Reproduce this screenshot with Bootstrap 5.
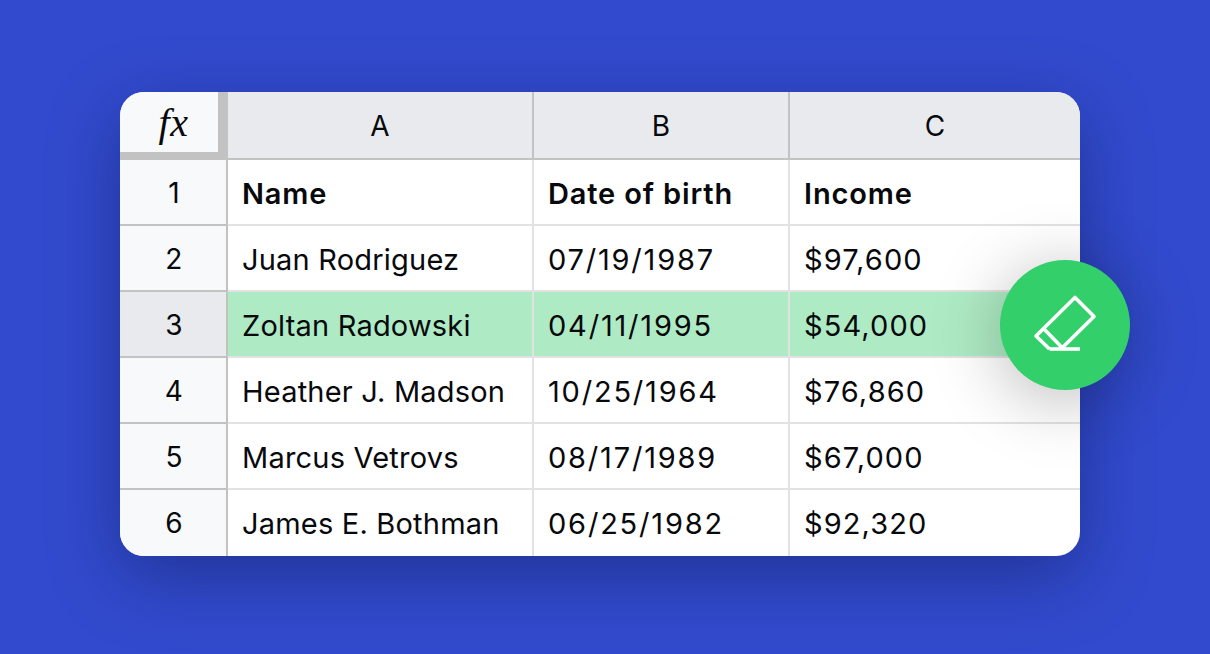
<!DOCTYPE html>
<html lang="en">
<head>
<meta charset="utf-8">
<title>Spreadsheet</title>
<link href="https://cdn.jsdelivr.net/npm/bootstrap@5.3.0/dist/css/bootstrap.min.css" rel="stylesheet">
<style>
html,body{height:654px;overflow:hidden}
body{background:#324bce;font-family:Inter,"Liberation Sans",sans-serif;color:#08090c}
.stage{padding:92px 0 0 120px}
.sheet{position:relative;width:960px}
.sheet-inner{display:grid;grid-template-columns:108px 306px 256px 290px;grid-template-rows:68px repeat(6,66px);height:464px;border-radius:24px;overflow:hidden;background:#fff}
.sheet-shadow{border-radius:24px;box-shadow:0 20px 70px rgba(10,20,70,.42)}
.cell{font-size:29px;line-height:1;padding-left:14px;padding-top:2px;border-right:2px solid #e2e2e2;border-bottom:2px solid #e2e2e2;letter-spacing:.2px}
.cell.last{border-right:0}
.cell.bottom{border-bottom:0;padding-top:0}
.cell.bold{font-weight:600;letter-spacing:.85px}
.cell.when{letter-spacing:1.8px}
.cell.sum{letter-spacing:1.1px}
.corner{background:#f8f9fb;border-right:10px solid #c2c2c2;border-bottom:8px solid #c2c2c2;font-family:"Liberation Serif",serif;font-style:italic;font-size:40px;letter-spacing:.5px;padding:2px 0 0 9px}
.colhead{background:#e9eaee;border-right:2px solid #c2c2c2;border-bottom:2px solid #c2c2c2;padding-left:0;font-size:28px}
.rowhead{background:#f8f9fb;border-right:2px solid #c2c2c2;border-bottom:2px solid #c2c2c2;padding-left:2px;font-size:28px}
.rowhead.on{background:#e9eaee}
.picked{background:#aeebc4}
.erase-btn{position:absolute;left:880px;top:168px;width:130px;height:130px;border-radius:50%;background:#33cf6b;box-shadow:0 10px 70px rgba(0,0,0,.28)}
.erase-btn svg{display:block}
</style>
</head>
<body>
<div class="stage">
<div class="sheet sheet-shadow">
<div class="sheet-inner">
<div class="cell corner d-flex align-items-center justify-content-center">fx</div>
<div class="cell colhead d-flex align-items-center justify-content-center">A</div>
<div class="cell colhead d-flex align-items-center justify-content-center">B</div>
<div class="cell colhead last d-flex align-items-center justify-content-center">C</div>

<div class="cell rowhead d-flex align-items-center justify-content-center">1</div>
<div class="cell bold d-flex align-items-center">Name</div>
<div class="cell bold d-flex align-items-center">Date of birth</div>
<div class="cell bold last d-flex align-items-center">Income</div>

<div class="cell rowhead d-flex align-items-center justify-content-center">2</div>
<div class="cell d-flex align-items-center">Juan Rodriguez</div>
<div class="cell when d-flex align-items-center">07/19/1987</div>
<div class="cell sum last d-flex align-items-center">$97,600</div>

<div class="cell rowhead on d-flex align-items-center justify-content-center">3</div>
<div class="cell picked d-flex align-items-center">Zoltan Radowski</div>
<div class="cell when picked d-flex align-items-center">04/11/1995</div>
<div class="cell sum picked last d-flex align-items-center">$54,000</div>

<div class="cell rowhead d-flex align-items-center justify-content-center">4</div>
<div class="cell d-flex align-items-center">Heather J. Madson</div>
<div class="cell when d-flex align-items-center">10/25/1964</div>
<div class="cell sum last d-flex align-items-center">$76,860</div>

<div class="cell rowhead d-flex align-items-center justify-content-center">5</div>
<div class="cell d-flex align-items-center">Marcus Vetrovs</div>
<div class="cell when d-flex align-items-center">08/17/1989</div>
<div class="cell sum last d-flex align-items-center">$67,000</div>

<div class="cell rowhead bottom d-flex align-items-center justify-content-center">6</div>
<div class="cell bottom d-flex align-items-center">James E. Bothman</div>
<div class="cell when bottom d-flex align-items-center">06/25/1982</div>
<div class="cell sum bottom last d-flex align-items-center">$92,320</div>
</div>
<div class="erase-btn">
<svg width="130" height="130" viewBox="0 0 130 130" fill="none" stroke="#fff" stroke-width="3.6" stroke-linejoin="round"><path d="M49.5 89 36 76 75 37.5 94 56.5 61 89"/><path d="M49.5 89H80"/><path d="M43.5 68.5 62 87.5"/></svg>
</div>
</div>
</div>
</body>
</html>
